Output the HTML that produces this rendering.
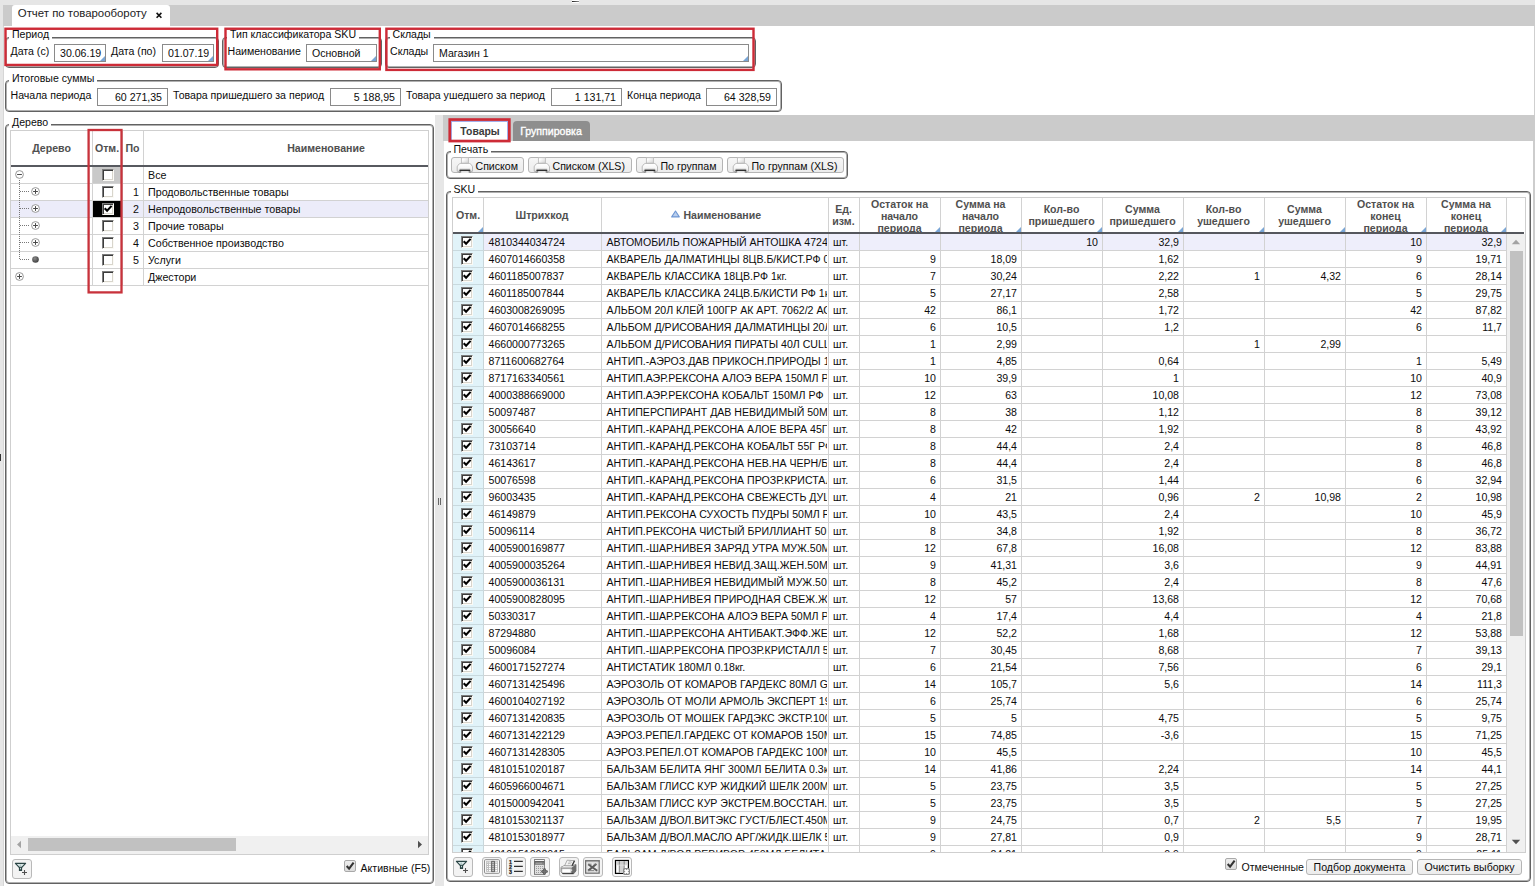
<!DOCTYPE html>
<html lang="ru"><head><meta charset="utf-8"><title>Отчет по товарообороту</title>
<style>
html,body{margin:0;padding:0}
body{width:1535px;height:886px;position:relative;overflow:hidden;background:#fff;font-family:"Liberation Sans",sans-serif;font-size:10.58px;line-height:12px;color:#0c0c0c}
div,span{box-sizing:border-box}
.a{position:absolute}
.fs{position:absolute;border:1px solid #626262;border-radius:4px;box-shadow:inset 0 0 0 1px #b0b0b0}
.lg{position:absolute;background:#fff;padding:0 3px;white-space:nowrap;height:12px;line-height:12px}
.lb{position:absolute;white-space:nowrap;height:12px;line-height:12px}
.in{position:absolute;border:1px solid #8a8a8a;background:#fff;height:18px;line-height:17px;white-space:nowrap;overflow:hidden;padding:0 5px}
.in.r{text-align:right}
.tri{position:absolute;right:0;bottom:0;width:0;height:0;border-style:solid;border-width:0 0 5px 5px;border-color:transparent transparent #79a5d6 transparent}
.red{position:absolute;border:2px solid #cd2b37;transform:translate(0.5px,0.5px)}
.btn{position:absolute;border:1px solid #b5b5b5;border-radius:3px;background:linear-gradient(#f6f6f6,#ececec);white-space:nowrap;text-align:center}
.hd{position:absolute;top:0;height:34px;text-align:center;font-weight:bold;color:#505050;overflow:hidden;border-right:1px solid #d2d2d2;line-height:12px;white-space:nowrap}
.hd span{position:absolute;left:0;right:0}
.h1 span{top:11px}.h2 span{top:4.5px}.h3 span{top:-0.5px}
.row{position:absolute;left:0;height:17px;border-bottom:1px solid #d2d2d2}
.c{position:absolute;top:0;height:16px;line-height:16px;border-right:1px solid #d2d2d2;white-space:nowrap;overflow:hidden;padding:0 5px}
.c.n{text-align:right;padding-right:4px}
.cb{position:absolute;width:12px;height:11.5px;background:#fff;border-top:1px solid #7c7c7c;border-left:1px solid #7c7c7c;border-right:1px solid #fbfaf6;border-bottom:1px solid #fbfaf6;box-shadow:inset 1px 1px 0 #3c3c3c,inset -1px -1px 0 #d8d5cc}
.cb svg{position:absolute;left:0;top:0}
.tb{position:absolute;width:19px;height:19px;border:1px solid #b9b9b9;border-radius:3px;background:#f3f3f3}
.tb svg{position:absolute;left:0;top:0}
</style></head>
<body>
<div class="a" style="left:0;top:0;width:1535px;height:5px;background:#e6e6e6"></div>
<div class="a" style="left:0;top:5px;width:1535px;height:21px;background:#cbcbcb"></div>
<div class="a" style="left:0;top:5px;width:3px;height:881px;background:#e6e6e6"></div>
<div class="a" style="left:3px;top:26px;width:1px;height:860px;background:#d6d6d6"></div>
<div class="a" style="left:1534px;top:26px;width:1px;height:90px;background:#cfcfcf"></div>
<div class="a" style="left:1533px;top:141px;width:2px;height:745px;background:#cdcdcd"></div>
<div class="a" style="left:572px;top:0;width:7px;height:3px;background:#fff"></div>
<div class="a" style="left:572px;top:1px;width:7px;height:1px;background:linear-gradient(90deg,#222,#8a8a8a)"></div>
<div class="a" style="left:12px;top:5px;width:158px;height:21px;background:#fff;border-radius:3px 3px 0 0"></div>
<div class="lb" style="left:17.8px;top:6px;font-size:11.4px;height:14px;line-height:14px;color:#222">Отчет по товарообороту</div>
<svg class="a" style="left:154px;top:11px" width="10" height="9" viewBox="0 0 10 9"><path d="M2.6 1.9 L7.4 6.7 M7.4 1.9 L2.6 6.7" stroke="#111" stroke-width="1.6" fill="none"/></svg>
<div class="fs" style="left:5px;top:37px;width:214px;height:31px"></div>
<div class="lg" style="left:9px;top:28px">Период</div>
<div class="lb" style="left:10.5px;top:45px">Дата (с)</div>
<div class="in" style="left:54px;top:44px;width:52px">30.06.19<i class="tri"></i></div>
<div class="lb" style="left:111px;top:45px">Дата (по)</div>
<div class="in" style="left:162px;top:44px;width:52px">01.07.19<i class="tri"></i></div>
<svg class="a" style="left:2px;top:25px" width="219" height="43" viewBox="0 0 219 43"><rect x="3.50" y="3.75" width="211.70" height="36.20" fill="none" stroke="#cd2b37" stroke-width="2.4"/></svg>
<div class="fs" style="left:222px;top:37px;width:160px;height:31px"></div>
<div class="lg" style="left:227px;top:28px">Тип классификатора SKU</div>
<div class="lb" style="left:227.5px;top:45px">Наименование</div>
<div class="in" style="left:306px;top:44px;width:71px">Основной<i class="tri"></i></div>
<svg class="a" style="left:222px;top:25px" width="161" height="48" viewBox="0 0 161 48"><rect x="3.50" y="3.75" width="154.30" height="40.55" fill="none" stroke="#cd2b37" stroke-width="2.4"/></svg>
<div class="fs" style="left:385px;top:37px;width:371px;height:31px"></div>
<div class="lg" style="left:389.5px;top:28px">Склады</div>
<div class="lb" style="left:390px;top:45px">Склады</div>
<div class="in" style="left:433px;top:44px;width:316px">Магазин 1<i class="tri"></i></div>
<svg class="a" style="left:383px;top:25px" width="374" height="48" viewBox="0 0 374 48"><rect x="3.40" y="3.75" width="367.10" height="41.15" fill="none" stroke="#cd2b37" stroke-width="2.4"/></svg>
<div class="fs" style="left:5px;top:80px;width:777px;height:32px"></div>
<div class="lg" style="left:9px;top:72px">Итоговые суммы</div>
<div class="lb" style="left:10.5px;top:89px">Начала периода</div>
<div class="in r" style="left:97px;top:88px;width:71px">60 271,35</div>
<div class="lb" style="left:173px;top:89px">Товара пришедшего за период</div>
<div class="in r" style="left:330px;top:88px;width:71px">5 188,95</div>
<div class="lb" style="left:406px;top:89px">Товара ушедшего за период</div>
<div class="in r" style="left:551px;top:88px;width:71px">1 131,71</div>
<div class="lb" style="left:627px;top:89px">Конца периода</div>
<div class="in r" style="left:706px;top:88px;width:71px">64 328,59</div>
<div class="fs" style="left:5px;top:124px;width:429px;height:760px"></div>
<div class="lg" style="left:9px;top:116px">Дерево</div>
<div class="a" id="tree" style="left:10px;top:130px;width:419px;height:725px;border:1px solid #cfcfcf;overflow:hidden">
<div class="hd h1" style="left:0px;width:82px;"><span>Дерево</span></div>
<div class="hd h1" style="left:81px;width:31px;"><span>Отм.</span></div>
<div class="hd h1" style="left:111px;width:22px;"><span>По</span></div>
<div class="hd h1" style="left:132px;width:366px;border-right:none;"><span>Наименование</span></div>
<div class="a" style="left:0;top:34px;width:417px;height:2px;background:#57595f"></div>
<div class="row" style="top:36px;width:417px;font-size:10.7px;">
<div class="c" style="left:0;width:82px"></div>
<div class="c" style="left:82px;width:30px;padding:0;background:#c9c9c9;"><div class="cb" style="left:9px;top:2px"></div></div>
<div class="c n" style="left:112px;width:21px;padding:0 4px 0 0"></div>
<div class="c" style="left:133px;width:284px;border-right:none;padding-left:4px">Все</div>
</div>
<div class="row" style="top:53px;width:417px;font-size:10.7px;">
<div class="c" style="left:0;width:82px"></div>
<div class="c" style="left:82px;width:30px;padding:0;"><div class="cb" style="left:9px;top:2px"></div></div>
<div class="c n" style="left:112px;width:21px;padding:0 4px 0 0">1</div>
<div class="c" style="left:133px;width:284px;border-right:none;padding-left:4px">Продовольственные товары</div>
</div>
<div class="row" style="top:70px;width:417px;font-size:10.7px;background:#ececf9;">
<div class="c" style="left:0;width:82px"></div>
<div class="c" style="left:82px;width:30px;padding:0;background:#000;"><div class="cb" style="left:9px;top:2px"><svg width="10" height="10" viewBox="0 0 10 10"><path d="M1.7 4.2 L4.1 6.8 L8.6 1.9" fill="none" stroke="#000" stroke-width="2.1"/></svg></div></div>
<div class="c n" style="left:112px;width:21px;padding:0 4px 0 0">2</div>
<div class="c" style="left:133px;width:284px;border-right:none;padding-left:4px">Непродовольственные товары</div>
</div>
<div class="row" style="top:87px;width:417px;font-size:10.7px;">
<div class="c" style="left:0;width:82px"></div>
<div class="c" style="left:82px;width:30px;padding:0;"><div class="cb" style="left:9px;top:2px"></div></div>
<div class="c n" style="left:112px;width:21px;padding:0 4px 0 0">3</div>
<div class="c" style="left:133px;width:284px;border-right:none;padding-left:4px">Прочие товары</div>
</div>
<div class="row" style="top:104px;width:417px;font-size:10.7px;">
<div class="c" style="left:0;width:82px"></div>
<div class="c" style="left:82px;width:30px;padding:0;"><div class="cb" style="left:9px;top:2px"></div></div>
<div class="c n" style="left:112px;width:21px;padding:0 4px 0 0">4</div>
<div class="c" style="left:133px;width:284px;border-right:none;padding-left:4px">Собственное производство</div>
</div>
<div class="row" style="top:121px;width:417px;font-size:10.7px;">
<div class="c" style="left:0;width:82px"></div>
<div class="c" style="left:82px;width:30px;padding:0;"><div class="cb" style="left:9px;top:2px"></div></div>
<div class="c n" style="left:112px;width:21px;padding:0 4px 0 0">5</div>
<div class="c" style="left:133px;width:284px;border-right:none;padding-left:4px">Услуги</div>
</div>
<div class="row" style="top:138px;width:417px;font-size:10.7px;">
<div class="c" style="left:0;width:82px"></div>
<div class="c" style="left:82px;width:30px;padding:0;"><div class="cb" style="left:9px;top:2px"></div></div>
<div class="c n" style="left:112px;width:21px;padding:0 4px 0 0"></div>
<div class="c" style="left:133px;width:284px;border-right:none;padding-left:4px">Джестори</div>
</div>
<div class="a" style="left:8px;top:49px;width:1px;height:80px;background:repeating-linear-gradient(#777 0 1px,transparent 1px 2px)"></div>
<div class="a" style="left:9px;top:60px;width:9px;height:1px;background:repeating-linear-gradient(90deg,#777 0 1px,transparent 1px 2px)"></div>
<div class="a" style="left:9px;top:77px;width:9px;height:1px;background:repeating-linear-gradient(90deg,#777 0 1px,transparent 1px 2px)"></div>
<div class="a" style="left:9px;top:94px;width:9px;height:1px;background:repeating-linear-gradient(90deg,#777 0 1px,transparent 1px 2px)"></div>
<div class="a" style="left:9px;top:111px;width:9px;height:1px;background:repeating-linear-gradient(90deg,#777 0 1px,transparent 1px 2px)"></div>
<div class="a" style="left:9px;top:128px;width:9px;height:1px;background:repeating-linear-gradient(90deg,#777 0 1px,transparent 1px 2px)"></div>
<svg class="a" style="left:2px;top:37px" width="12" height="12" viewBox="0 0 12 12"><circle cx="6.5" cy="6.5" r="3.9" fill="#fff" stroke="#8c8c8c" stroke-width="0.9"/><path d="M4.1 6.5 H8.9" stroke="#4a4a4a" stroke-width="1" fill="none"/></svg>
<svg class="a" style="left:18px;top:54px" width="12" height="12" viewBox="0 0 12 12"><circle cx="6.5" cy="6.5" r="3.9" fill="#fff" stroke="#8c8c8c" stroke-width="0.9"/><path d="M4.1 6.5 H8.9 M6.5 4.1 V8.9" stroke="#4a4a4a" stroke-width="1" fill="none"/></svg>
<svg class="a" style="left:18px;top:71px" width="12" height="12" viewBox="0 0 12 12"><circle cx="6.5" cy="6.5" r="3.9" fill="#fff" stroke="#8c8c8c" stroke-width="0.9"/><path d="M4.1 6.5 H8.9 M6.5 4.1 V8.9" stroke="#4a4a4a" stroke-width="1" fill="none"/></svg>
<svg class="a" style="left:18px;top:88px" width="12" height="12" viewBox="0 0 12 12"><circle cx="6.5" cy="6.5" r="3.9" fill="#fff" stroke="#8c8c8c" stroke-width="0.9"/><path d="M4.1 6.5 H8.9 M6.5 4.1 V8.9" stroke="#4a4a4a" stroke-width="1" fill="none"/></svg>
<svg class="a" style="left:18px;top:105px" width="12" height="12" viewBox="0 0 12 12"><circle cx="6.5" cy="6.5" r="3.9" fill="#fff" stroke="#8c8c8c" stroke-width="0.9"/><path d="M4.1 6.5 H8.9 M6.5 4.1 V8.9" stroke="#4a4a4a" stroke-width="1" fill="none"/></svg>
<svg class="a" style="left:18px;top:122px" width="12" height="12" viewBox="0 0 12 12"><defs><radialGradient id="dg" cx="0.4" cy="0.35" r="0.7"><stop offset="0" stop-color="#8a8a8a"/><stop offset="1" stop-color="#3a3a3a"/></radialGradient></defs><circle cx="6.5" cy="6.5" r="3.3" fill="url(#dg)"/></svg>
<svg class="a" style="left:2px;top:139px" width="12" height="12" viewBox="0 0 12 12"><circle cx="6.5" cy="6.5" r="3.9" fill="#fff" stroke="#8c8c8c" stroke-width="0.9"/><path d="M4.1 6.5 H8.9 M6.5 4.1 V8.9" stroke="#4a4a4a" stroke-width="1" fill="none"/></svg>
<div class="a" style="left:0;top:705px;width:417px;height:18px;background:#f0f0f0"></div>
<div class="a" style="left:17px;top:707px;width:208px;height:13px;background:#c1c1c1"></div>
<svg class="a" style="left:5px;top:709px" width="6" height="9" viewBox="0 0 6 9"><path d="M5 0.8 L1 4.5 L5 8.2 Z" fill="#a3a3a3"/></svg>
<svg class="a" style="left:406px;top:709px" width="6" height="9" viewBox="0 0 6 9"><path d="M1 0.8 L5 4.5 L1 8.2 Z" fill="#505050"/></svg>
</div>
<svg class="a" style="left:85px;top:127px" width="40" height="169" viewBox="0 0 40 169"><rect x="3.60" y="3.00" width="32.90" height="162.40" fill="none" stroke="#c8323b" stroke-width="2.3"/></svg>
<div class="tb" style="left:12px;top:859px;width:20px;height:20px"></div>
<svg class="a" style="left:12px;top:859px" width="20" height="20" viewBox="0 0 20 20"><g transform="translate(0.2,0.2)"><path d="M3.2 4.1 H13.4 L9.6 8.1 H7 Z" fill="#dbe8e8" stroke="#2b4545" stroke-width="1.15" stroke-linejoin="round"/><rect x="6.7" y="7.9" width="3.2" height="3.9" fill="#2b4545"/><rect x="7.8" y="8.6" width="1" height="1.5" fill="#c5d8d8"/><circle cx="8" cy="6" r="0.6" fill="#8aa"/><path d="M9.8 13.3 H14.8 M12.3 10.8 V15.8" stroke="#505050" stroke-width="1.1" fill="none"/></g></svg>
<div class="a" style="left:344px;top:860px;width:12px;height:12px;border:1px solid #a9a9a9;border-radius:2px;background:linear-gradient(#ededed,#dcdcdc)"><svg class="a" style="left:0;top:0" width="10" height="10" viewBox="0 0 10 10"><path d="M1.7 5 L4.1 7.6 L8.6 1.7" fill="none" stroke="#333" stroke-width="2.1"/></svg></div>
<div class="lb" style="left:360.5px;top:862px">Активные (F5)</div>
<div class="a" style="left:435px;top:115px;width:9px;height:771px;background:#e6e6e6"></div>
<div class="a" style="left:438px;top:498px;width:1px;height:7px;background:#666"></div>
<div class="a" style="left:440px;top:498px;width:1px;height:7px;background:#666"></div>
<div class="a" style="left:443px;top:115px;width:1092px;height:26px;background:#cbcbcb"></div>
<div class="a" style="left:512.5px;top:121px;width:77px;height:20px;background:#8e8e8e;border-radius:4px 4px 0 0;color:#fff;text-align:center;line-height:20px;-webkit-text-stroke:0.35px #fff">Группировка</div>
<div class="a" style="left:451px;top:121px;width:57px;height:20px;background:#fff;border:1px solid #a3afea;border-bottom:none;font-weight:bold;font-size:10.4px;text-align:center;line-height:19px;color:#3a3a3a;padding-left:1px">Товары</div>
<svg class="a" style="left:446px;top:116px" width="68" height="30" viewBox="0 0 68 30"><rect x="3.75" y="3.55" width="59.6" height="21.5" fill="none" stroke="#cd2b37" stroke-width="2.7"/></svg>
<div class="fs" style="left:446px;top:151px;width:402px;height:28px"></div>
<div class="lg" style="left:450.5px;top:143px">Печать</div>
<div class="btn" style="left:451px;top:157px;width:73px;height:16px;line-height:16px;text-align:left;padding-left:23.5px">Списком</div>
<svg class="a" style="left:451px;top:157px" width="24" height="17" viewBox="0 0 24 17"><defs><linearGradient id="pg0" x1="0" y1="0" x2="1" y2="1"><stop offset="0.25" stop-color="#fff"/><stop offset="1" stop-color="#cfcfcf"/></linearGradient><linearGradient id="ps0" x1="0" y1="0" x2="0" y2="1"><stop offset="0" stop-color="#8a8a8a"/><stop offset="0.55" stop-color="#333"/><stop offset="1" stop-color="#222"/></linearGradient><linearGradient id="pb0" x1="0" y1="0" x2="0" y2="1"><stop offset="0" stop-color="#fff"/><stop offset="0.6" stop-color="#f4f4f4"/><stop offset="1" stop-color="#d0d0d0"/></linearGradient></defs><rect x="10.4" y="0.7" width="7" height="5.6" fill="url(#pg0)" stroke="#bdbdbd" stroke-width="0.9"/><path d="M6.2 14.3 V9.8 Q6.3 8.4 8.4 6.9 Q9 6.4 9.8 6.4 H17.9 Q18.7 6.4 19.3 6.9 Q21.4 8.4 21.5 9.8 V14.3 H20.5 L19.9 15.5 H18.3 L17.9 14.3 H9.8 L9.4 15.5 H7.8 L7.2 14.3 Z" fill="url(#pb0)" stroke="#b2b2b2" stroke-width="0.9" stroke-linejoin="round"/><path d="M7.4 14.4 L7.9 15.5 H9.3 L9.8 14.4 Z M17.9 14.4 L18.4 15.5 H19.8 L20.3 14.4 Z" fill="#7a7a7a"/><rect x="8.3" y="12.3" width="11.1" height="1.9" rx="0.9" fill="url(#ps0)"/><rect x="8.6" y="11.6" width="10.5" height="0.8" fill="#9a9a9a" opacity="0.4"/><rect x="10.2" y="14.3" width="7.4" height="1.4" fill="#fff"/></svg>
<div class="btn" style="left:528px;top:157px;width:104px;height:16px;line-height:16px;text-align:left;padding-left:23.5px">Списком (XLS)</div>
<svg class="a" style="left:528px;top:157px" width="24" height="17" viewBox="0 0 24 17"><defs><linearGradient id="pg1" x1="0" y1="0" x2="1" y2="1"><stop offset="0.25" stop-color="#fff"/><stop offset="1" stop-color="#cfcfcf"/></linearGradient><linearGradient id="ps1" x1="0" y1="0" x2="0" y2="1"><stop offset="0" stop-color="#8a8a8a"/><stop offset="0.55" stop-color="#333"/><stop offset="1" stop-color="#222"/></linearGradient><linearGradient id="pb1" x1="0" y1="0" x2="0" y2="1"><stop offset="0" stop-color="#fff"/><stop offset="0.6" stop-color="#f4f4f4"/><stop offset="1" stop-color="#d0d0d0"/></linearGradient></defs><rect x="10.4" y="0.7" width="7" height="5.6" fill="url(#pg1)" stroke="#bdbdbd" stroke-width="0.9"/><path d="M6.2 14.3 V9.8 Q6.3 8.4 8.4 6.9 Q9 6.4 9.8 6.4 H17.9 Q18.7 6.4 19.3 6.9 Q21.4 8.4 21.5 9.8 V14.3 H20.5 L19.9 15.5 H18.3 L17.9 14.3 H9.8 L9.4 15.5 H7.8 L7.2 14.3 Z" fill="url(#pb1)" stroke="#b2b2b2" stroke-width="0.9" stroke-linejoin="round"/><path d="M7.4 14.4 L7.9 15.5 H9.3 L9.8 14.4 Z M17.9 14.4 L18.4 15.5 H19.8 L20.3 14.4 Z" fill="#7a7a7a"/><rect x="8.3" y="12.3" width="11.1" height="1.9" rx="0.9" fill="url(#ps1)"/><rect x="8.6" y="11.6" width="10.5" height="0.8" fill="#9a9a9a" opacity="0.4"/><rect x="10.2" y="14.3" width="7.4" height="1.4" fill="#fff"/></svg>
<div class="btn" style="left:636px;top:157px;width:87px;height:16px;line-height:16px;text-align:left;padding-left:23.5px">По группам</div>
<svg class="a" style="left:636px;top:157px" width="24" height="17" viewBox="0 0 24 17"><defs><linearGradient id="pg2" x1="0" y1="0" x2="1" y2="1"><stop offset="0.25" stop-color="#fff"/><stop offset="1" stop-color="#cfcfcf"/></linearGradient><linearGradient id="ps2" x1="0" y1="0" x2="0" y2="1"><stop offset="0" stop-color="#8a8a8a"/><stop offset="0.55" stop-color="#333"/><stop offset="1" stop-color="#222"/></linearGradient><linearGradient id="pb2" x1="0" y1="0" x2="0" y2="1"><stop offset="0" stop-color="#fff"/><stop offset="0.6" stop-color="#f4f4f4"/><stop offset="1" stop-color="#d0d0d0"/></linearGradient></defs><rect x="10.4" y="0.7" width="7" height="5.6" fill="url(#pg2)" stroke="#bdbdbd" stroke-width="0.9"/><path d="M6.2 14.3 V9.8 Q6.3 8.4 8.4 6.9 Q9 6.4 9.8 6.4 H17.9 Q18.7 6.4 19.3 6.9 Q21.4 8.4 21.5 9.8 V14.3 H20.5 L19.9 15.5 H18.3 L17.9 14.3 H9.8 L9.4 15.5 H7.8 L7.2 14.3 Z" fill="url(#pb2)" stroke="#b2b2b2" stroke-width="0.9" stroke-linejoin="round"/><path d="M7.4 14.4 L7.9 15.5 H9.3 L9.8 14.4 Z M17.9 14.4 L18.4 15.5 H19.8 L20.3 14.4 Z" fill="#7a7a7a"/><rect x="8.3" y="12.3" width="11.1" height="1.9" rx="0.9" fill="url(#ps2)"/><rect x="8.6" y="11.6" width="10.5" height="0.8" fill="#9a9a9a" opacity="0.4"/><rect x="10.2" y="14.3" width="7.4" height="1.4" fill="#fff"/></svg>
<div class="btn" style="left:727px;top:157px;width:117px;height:16px;line-height:16px;text-align:left;padding-left:23.5px">По группам (XLS)</div>
<svg class="a" style="left:727px;top:157px" width="24" height="17" viewBox="0 0 24 17"><defs><linearGradient id="pg3" x1="0" y1="0" x2="1" y2="1"><stop offset="0.25" stop-color="#fff"/><stop offset="1" stop-color="#cfcfcf"/></linearGradient><linearGradient id="ps3" x1="0" y1="0" x2="0" y2="1"><stop offset="0" stop-color="#8a8a8a"/><stop offset="0.55" stop-color="#333"/><stop offset="1" stop-color="#222"/></linearGradient><linearGradient id="pb3" x1="0" y1="0" x2="0" y2="1"><stop offset="0" stop-color="#fff"/><stop offset="0.6" stop-color="#f4f4f4"/><stop offset="1" stop-color="#d0d0d0"/></linearGradient></defs><rect x="10.4" y="0.7" width="7" height="5.6" fill="url(#pg3)" stroke="#bdbdbd" stroke-width="0.9"/><path d="M6.2 14.3 V9.8 Q6.3 8.4 8.4 6.9 Q9 6.4 9.8 6.4 H17.9 Q18.7 6.4 19.3 6.9 Q21.4 8.4 21.5 9.8 V14.3 H20.5 L19.9 15.5 H18.3 L17.9 14.3 H9.8 L9.4 15.5 H7.8 L7.2 14.3 Z" fill="url(#pb3)" stroke="#b2b2b2" stroke-width="0.9" stroke-linejoin="round"/><path d="M7.4 14.4 L7.9 15.5 H9.3 L9.8 14.4 Z M17.9 14.4 L18.4 15.5 H19.8 L20.3 14.4 Z" fill="#7a7a7a"/><rect x="8.3" y="12.3" width="11.1" height="1.9" rx="0.9" fill="url(#ps3)"/><rect x="8.6" y="11.6" width="10.5" height="0.8" fill="#9a9a9a" opacity="0.4"/><rect x="10.2" y="14.3" width="7.4" height="1.4" fill="#fff"/></svg>
<div class="fs" style="left:446px;top:191px;width:1085px;height:691px"></div>
<div class="lg" style="left:450.5px;top:183px">SKU</div>
<div class="a" id="grid" style="left:452px;top:197px;width:1074px;height:656px;border:1px solid #cfcfcf;overflow:hidden">
<div class="hd h1" style="left:0px;width:31px"><span>Отм.</span><i class="tri"></i></div>
<div class="hd h1" style="left:30px;width:119px"><span>Штрихкод</span></div>
<div class="hd h1" style="left:148px;width:228px"><span><svg width="9" height="8" viewBox="0 0 9 8" style="margin:0 3.5px 0 3px;position:relative;top:-1px"><path d="M4.5 1 L8.3 6.9 H0.7 Z" fill="#b9cfee" stroke="#6f97d3" stroke-width="1.1" stroke-linejoin="round"/></svg>Наименование</span></div>
<div class="hd h2" style="left:375px;width:32px"><span>Ед.<br>изм.</span></div>
<div class="hd h3" style="left:406px;width:82px"><span>Остаток на<br>начало<br>периода</span><i class="tri"></i></div>
<div class="hd h3" style="left:487px;width:82px"><span>Сумма на<br>начало<br>периода</span><i class="tri"></i></div>
<div class="hd h2" style="left:568px;width:82px"><span>Кол-во<br>пришедшего</span><i class="tri"></i></div>
<div class="hd h2" style="left:649px;width:82px"><span>Сумма<br>пришедшего</span><i class="tri"></i></div>
<div class="hd h2" style="left:730px;width:82px"><span>Кол-во<br>ушедшего</span><i class="tri"></i></div>
<div class="hd h2" style="left:811px;width:82px"><span>Сумма<br>ушедшего</span><i class="tri"></i></div>
<div class="hd h3" style="left:892px;width:82px"><span>Остаток на<br>конец<br>периода</span><i class="tri"></i></div>
<div class="hd h3" style="left:973px;width:81px"><span>Сумма на<br>конец<br>периода</span><i class="tri"></i></div>
<div class="a" style="left:0;top:34px;width:1071px;height:2px;background:#55575d"></div>
<div class="row" style="top:36px;width:1054px;background:#eeeefb;">
<div class="c" style="left:0;width:31px;padding:0;background:#e1f3f9;box-shadow:0 1px 0 #c9d9de;border-right-color:#c9d6da"><div class="cb" style="left:8px;top:2px"><svg width="10" height="10" viewBox="0 0 10 10"><path d="M1.7 4.2 L4.1 6.8 L8.6 1.9" fill="none" stroke="#000" stroke-width="2.1"/></svg></div></div>
<div class="c" style="left:31px;width:118px;padding:0 0 0 4.5px">4810344034724</div>
<div class="c" style="left:149px;width:225px;padding:0 0 0 4.5px;border-right:none">АВТОМОБИЛЬ ПОЖАРНЫЙ АНТОШКА 4724 В ПАК.</div><div class="a" style="left:375px;top:0;width:1px;height:16px;background:#d2d2d2"></div>
<div class="c" style="left:376px;width:31px;padding:0 0 0 4px">шт.</div>
<div class="c n" style="left:407px;width:81px"></div>
<div class="c n" style="left:488px;width:81px"></div>
<div class="c n" style="left:569px;width:81px">10</div>
<div class="c n" style="left:650px;width:81px">32,9</div>
<div class="c n" style="left:731px;width:81px"></div>
<div class="c n" style="left:812px;width:81px"></div>
<div class="c n" style="left:893px;width:81px">10</div>
<div class="c n" style="left:974px;width:80px">32,9</div>
</div>
<div class="row" style="top:53px;width:1054px;">
<div class="c" style="left:0;width:31px;padding:0;background:#e1f3f9;box-shadow:0 1px 0 #c9d9de;border-right-color:#c9d6da"><div class="cb" style="left:8px;top:2px"><svg width="10" height="10" viewBox="0 0 10 10"><path d="M1.7 4.2 L4.1 6.8 L8.6 1.9" fill="none" stroke="#000" stroke-width="2.1"/></svg></div></div>
<div class="c" style="left:31px;width:118px;padding:0 0 0 4.5px">4607014660358</div>
<div class="c" style="left:149px;width:225px;padding:0 0 0 4.5px;border-right:none">АКВАРЕЛЬ ДАЛМАТИНЦЫ 8ЦВ.Б/КИСТ.РФ 0.04кг.</div><div class="a" style="left:375px;top:0;width:1px;height:16px;background:#d2d2d2"></div>
<div class="c" style="left:376px;width:31px;padding:0 0 0 4px">шт.</div>
<div class="c n" style="left:407px;width:81px">9</div>
<div class="c n" style="left:488px;width:81px">18,09</div>
<div class="c n" style="left:569px;width:81px"></div>
<div class="c n" style="left:650px;width:81px">1,62</div>
<div class="c n" style="left:731px;width:81px"></div>
<div class="c n" style="left:812px;width:81px"></div>
<div class="c n" style="left:893px;width:81px">9</div>
<div class="c n" style="left:974px;width:80px">19,71</div>
</div>
<div class="row" style="top:70px;width:1054px;">
<div class="c" style="left:0;width:31px;padding:0;background:#e1f3f9;box-shadow:0 1px 0 #c9d9de;border-right-color:#c9d6da"><div class="cb" style="left:8px;top:2px"><svg width="10" height="10" viewBox="0 0 10 10"><path d="M1.7 4.2 L4.1 6.8 L8.6 1.9" fill="none" stroke="#000" stroke-width="2.1"/></svg></div></div>
<div class="c" style="left:31px;width:118px;padding:0 0 0 4.5px">4601185007837</div>
<div class="c" style="left:149px;width:225px;padding:0 0 0 4.5px;border-right:none">АКВАРЕЛЬ КЛАССИКА 18ЦВ.РФ 1кг.</div><div class="a" style="left:375px;top:0;width:1px;height:16px;background:#d2d2d2"></div>
<div class="c" style="left:376px;width:31px;padding:0 0 0 4px">шт.</div>
<div class="c n" style="left:407px;width:81px">7</div>
<div class="c n" style="left:488px;width:81px">30,24</div>
<div class="c n" style="left:569px;width:81px"></div>
<div class="c n" style="left:650px;width:81px">2,22</div>
<div class="c n" style="left:731px;width:81px">1</div>
<div class="c n" style="left:812px;width:81px">4,32</div>
<div class="c n" style="left:893px;width:81px">6</div>
<div class="c n" style="left:974px;width:80px">28,14</div>
</div>
<div class="row" style="top:87px;width:1054px;">
<div class="c" style="left:0;width:31px;padding:0;background:#e1f3f9;box-shadow:0 1px 0 #c9d9de;border-right-color:#c9d6da"><div class="cb" style="left:8px;top:2px"><svg width="10" height="10" viewBox="0 0 10 10"><path d="M1.7 4.2 L4.1 6.8 L8.6 1.9" fill="none" stroke="#000" stroke-width="2.1"/></svg></div></div>
<div class="c" style="left:31px;width:118px;padding:0 0 0 4.5px">4601185007844</div>
<div class="c" style="left:149px;width:225px;padding:0 0 0 4.5px;border-right:none">АКВАРЕЛЬ КЛАССИКА 24ЦВ.Б/КИСТИ РФ 1кг.</div><div class="a" style="left:375px;top:0;width:1px;height:16px;background:#d2d2d2"></div>
<div class="c" style="left:376px;width:31px;padding:0 0 0 4px">шт.</div>
<div class="c n" style="left:407px;width:81px">5</div>
<div class="c n" style="left:488px;width:81px">27,17</div>
<div class="c n" style="left:569px;width:81px"></div>
<div class="c n" style="left:650px;width:81px">2,58</div>
<div class="c n" style="left:731px;width:81px"></div>
<div class="c n" style="left:812px;width:81px"></div>
<div class="c n" style="left:893px;width:81px">5</div>
<div class="c n" style="left:974px;width:80px">29,75</div>
</div>
<div class="row" style="top:104px;width:1054px;">
<div class="c" style="left:0;width:31px;padding:0;background:#e1f3f9;box-shadow:0 1px 0 #c9d9de;border-right-color:#c9d6da"><div class="cb" style="left:8px;top:2px"><svg width="10" height="10" viewBox="0 0 10 10"><path d="M1.7 4.2 L4.1 6.8 L8.6 1.9" fill="none" stroke="#000" stroke-width="2.1"/></svg></div></div>
<div class="c" style="left:31px;width:118px;padding:0 0 0 4.5px">4603008269095</div>
<div class="c" style="left:149px;width:225px;padding:0 0 0 4.5px;border-right:none">АЛЬБОМ 20Л КЛЕЙ 100ГР АК АРТ. 7062/2 АС</div><div class="a" style="left:375px;top:0;width:1px;height:16px;background:#d2d2d2"></div>
<div class="c" style="left:376px;width:31px;padding:0 0 0 4px">шт.</div>
<div class="c n" style="left:407px;width:81px">42</div>
<div class="c n" style="left:488px;width:81px">86,1</div>
<div class="c n" style="left:569px;width:81px"></div>
<div class="c n" style="left:650px;width:81px">1,72</div>
<div class="c n" style="left:731px;width:81px"></div>
<div class="c n" style="left:812px;width:81px"></div>
<div class="c n" style="left:893px;width:81px">42</div>
<div class="c n" style="left:974px;width:80px">87,82</div>
</div>
<div class="row" style="top:121px;width:1054px;">
<div class="c" style="left:0;width:31px;padding:0;background:#e1f3f9;box-shadow:0 1px 0 #c9d9de;border-right-color:#c9d6da"><div class="cb" style="left:8px;top:2px"><svg width="10" height="10" viewBox="0 0 10 10"><path d="M1.7 4.2 L4.1 6.8 L8.6 1.9" fill="none" stroke="#000" stroke-width="2.1"/></svg></div></div>
<div class="c" style="left:31px;width:118px;padding:0 0 0 4.5px">4607014668255</div>
<div class="c" style="left:149px;width:225px;padding:0 0 0 4.5px;border-right:none">АЛЬБОМ Д/РИСОВАНИЯ ДАЛМАТИНЦЫ 20Л РФ</div><div class="a" style="left:375px;top:0;width:1px;height:16px;background:#d2d2d2"></div>
<div class="c" style="left:376px;width:31px;padding:0 0 0 4px">шт.</div>
<div class="c n" style="left:407px;width:81px">6</div>
<div class="c n" style="left:488px;width:81px">10,5</div>
<div class="c n" style="left:569px;width:81px"></div>
<div class="c n" style="left:650px;width:81px">1,2</div>
<div class="c n" style="left:731px;width:81px"></div>
<div class="c n" style="left:812px;width:81px"></div>
<div class="c n" style="left:893px;width:81px">6</div>
<div class="c n" style="left:974px;width:80px">11,7</div>
</div>
<div class="row" style="top:138px;width:1054px;">
<div class="c" style="left:0;width:31px;padding:0;background:#e1f3f9;box-shadow:0 1px 0 #c9d9de;border-right-color:#c9d6da"><div class="cb" style="left:8px;top:2px"><svg width="10" height="10" viewBox="0 0 10 10"><path d="M1.7 4.2 L4.1 6.8 L8.6 1.9" fill="none" stroke="#000" stroke-width="2.1"/></svg></div></div>
<div class="c" style="left:31px;width:118px;padding:0 0 0 4.5px">4660000773265</div>
<div class="c" style="left:149px;width:225px;padding:0 0 0 4.5px;border-right:none">АЛЬБОМ Д/РИСОВАНИЯ ПИРАТЫ 40Л CULLINAN</div><div class="a" style="left:375px;top:0;width:1px;height:16px;background:#d2d2d2"></div>
<div class="c" style="left:376px;width:31px;padding:0 0 0 4px">шт.</div>
<div class="c n" style="left:407px;width:81px">1</div>
<div class="c n" style="left:488px;width:81px">2,99</div>
<div class="c n" style="left:569px;width:81px"></div>
<div class="c n" style="left:650px;width:81px"></div>
<div class="c n" style="left:731px;width:81px">1</div>
<div class="c n" style="left:812px;width:81px">2,99</div>
<div class="c n" style="left:893px;width:81px"></div>
<div class="c n" style="left:974px;width:80px"></div>
</div>
<div class="row" style="top:155px;width:1054px;">
<div class="c" style="left:0;width:31px;padding:0;background:#e1f3f9;box-shadow:0 1px 0 #c9d9de;border-right-color:#c9d6da"><div class="cb" style="left:8px;top:2px"><svg width="10" height="10" viewBox="0 0 10 10"><path d="M1.7 4.2 L4.1 6.8 L8.6 1.9" fill="none" stroke="#000" stroke-width="2.1"/></svg></div></div>
<div class="c" style="left:31px;width:118px;padding:0 0 0 4.5px">8711600682764</div>
<div class="c" style="left:149px;width:225px;padding:0 0 0 4.5px;border-right:none">АНТИП.-АЭРОЗ.ДАВ ПРИКОСН.ПРИРОДЫ 150МЛ</div><div class="a" style="left:375px;top:0;width:1px;height:16px;background:#d2d2d2"></div>
<div class="c" style="left:376px;width:31px;padding:0 0 0 4px">шт.</div>
<div class="c n" style="left:407px;width:81px">1</div>
<div class="c n" style="left:488px;width:81px">4,85</div>
<div class="c n" style="left:569px;width:81px"></div>
<div class="c n" style="left:650px;width:81px">0,64</div>
<div class="c n" style="left:731px;width:81px"></div>
<div class="c n" style="left:812px;width:81px"></div>
<div class="c n" style="left:893px;width:81px">1</div>
<div class="c n" style="left:974px;width:80px">5,49</div>
</div>
<div class="row" style="top:172px;width:1054px;">
<div class="c" style="left:0;width:31px;padding:0;background:#e1f3f9;box-shadow:0 1px 0 #c9d9de;border-right-color:#c9d6da"><div class="cb" style="left:8px;top:2px"><svg width="10" height="10" viewBox="0 0 10 10"><path d="M1.7 4.2 L4.1 6.8 L8.6 1.9" fill="none" stroke="#000" stroke-width="2.1"/></svg></div></div>
<div class="c" style="left:31px;width:118px;padding:0 0 0 4.5px">8717163340561</div>
<div class="c" style="left:149px;width:225px;padding:0 0 0 4.5px;border-right:none">АНТИП.АЭР.РЕКСОНА АЛОЭ ВЕРА 150МЛ РФ</div><div class="a" style="left:375px;top:0;width:1px;height:16px;background:#d2d2d2"></div>
<div class="c" style="left:376px;width:31px;padding:0 0 0 4px">шт.</div>
<div class="c n" style="left:407px;width:81px">10</div>
<div class="c n" style="left:488px;width:81px">39,9</div>
<div class="c n" style="left:569px;width:81px"></div>
<div class="c n" style="left:650px;width:81px">1</div>
<div class="c n" style="left:731px;width:81px"></div>
<div class="c n" style="left:812px;width:81px"></div>
<div class="c n" style="left:893px;width:81px">10</div>
<div class="c n" style="left:974px;width:80px">40,9</div>
</div>
<div class="row" style="top:189px;width:1054px;">
<div class="c" style="left:0;width:31px;padding:0;background:#e1f3f9;box-shadow:0 1px 0 #c9d9de;border-right-color:#c9d6da"><div class="cb" style="left:8px;top:2px"><svg width="10" height="10" viewBox="0 0 10 10"><path d="M1.7 4.2 L4.1 6.8 L8.6 1.9" fill="none" stroke="#000" stroke-width="2.1"/></svg></div></div>
<div class="c" style="left:31px;width:118px;padding:0 0 0 4.5px">4000388669000</div>
<div class="c" style="left:149px;width:225px;padding:0 0 0 4.5px;border-right:none">АНТИП.АЭР.РЕКСОНА КОБАЛЬТ 150МЛ РФ</div><div class="a" style="left:375px;top:0;width:1px;height:16px;background:#d2d2d2"></div>
<div class="c" style="left:376px;width:31px;padding:0 0 0 4px">шт.</div>
<div class="c n" style="left:407px;width:81px">12</div>
<div class="c n" style="left:488px;width:81px">63</div>
<div class="c n" style="left:569px;width:81px"></div>
<div class="c n" style="left:650px;width:81px">10,08</div>
<div class="c n" style="left:731px;width:81px"></div>
<div class="c n" style="left:812px;width:81px"></div>
<div class="c n" style="left:893px;width:81px">12</div>
<div class="c n" style="left:974px;width:80px">73,08</div>
</div>
<div class="row" style="top:206px;width:1054px;">
<div class="c" style="left:0;width:31px;padding:0;background:#e1f3f9;box-shadow:0 1px 0 #c9d9de;border-right-color:#c9d6da"><div class="cb" style="left:8px;top:2px"><svg width="10" height="10" viewBox="0 0 10 10"><path d="M1.7 4.2 L4.1 6.8 L8.6 1.9" fill="none" stroke="#000" stroke-width="2.1"/></svg></div></div>
<div class="c" style="left:31px;width:118px;padding:0 0 0 4.5px">50097487</div>
<div class="c" style="left:149px;width:225px;padding:0 0 0 4.5px;border-right:none">АНТИПЕРСПИРАНТ ДАВ НЕВИДИМЫЙ 50МЛ РФ</div><div class="a" style="left:375px;top:0;width:1px;height:16px;background:#d2d2d2"></div>
<div class="c" style="left:376px;width:31px;padding:0 0 0 4px">шт.</div>
<div class="c n" style="left:407px;width:81px">8</div>
<div class="c n" style="left:488px;width:81px">38</div>
<div class="c n" style="left:569px;width:81px"></div>
<div class="c n" style="left:650px;width:81px">1,12</div>
<div class="c n" style="left:731px;width:81px"></div>
<div class="c n" style="left:812px;width:81px"></div>
<div class="c n" style="left:893px;width:81px">8</div>
<div class="c n" style="left:974px;width:80px">39,12</div>
</div>
<div class="row" style="top:223px;width:1054px;">
<div class="c" style="left:0;width:31px;padding:0;background:#e1f3f9;box-shadow:0 1px 0 #c9d9de;border-right-color:#c9d6da"><div class="cb" style="left:8px;top:2px"><svg width="10" height="10" viewBox="0 0 10 10"><path d="M1.7 4.2 L4.1 6.8 L8.6 1.9" fill="none" stroke="#000" stroke-width="2.1"/></svg></div></div>
<div class="c" style="left:31px;width:118px;padding:0 0 0 4.5px">30056640</div>
<div class="c" style="left:149px;width:225px;padding:0 0 0 4.5px;border-right:none">АНТИП.-КАРАНД.РЕКСОНА АЛОЕ ВЕРА 45Г РФ</div><div class="a" style="left:375px;top:0;width:1px;height:16px;background:#d2d2d2"></div>
<div class="c" style="left:376px;width:31px;padding:0 0 0 4px">шт.</div>
<div class="c n" style="left:407px;width:81px">8</div>
<div class="c n" style="left:488px;width:81px">42</div>
<div class="c n" style="left:569px;width:81px"></div>
<div class="c n" style="left:650px;width:81px">1,92</div>
<div class="c n" style="left:731px;width:81px"></div>
<div class="c n" style="left:812px;width:81px"></div>
<div class="c n" style="left:893px;width:81px">8</div>
<div class="c n" style="left:974px;width:80px">43,92</div>
</div>
<div class="row" style="top:240px;width:1054px;">
<div class="c" style="left:0;width:31px;padding:0;background:#e1f3f9;box-shadow:0 1px 0 #c9d9de;border-right-color:#c9d6da"><div class="cb" style="left:8px;top:2px"><svg width="10" height="10" viewBox="0 0 10 10"><path d="M1.7 4.2 L4.1 6.8 L8.6 1.9" fill="none" stroke="#000" stroke-width="2.1"/></svg></div></div>
<div class="c" style="left:31px;width:118px;padding:0 0 0 4.5px">73103714</div>
<div class="c" style="left:149px;width:225px;padding:0 0 0 4.5px;border-right:none">АНТИП.-КАРАНД.РЕКСОНА КОБАЛЬТ 55Г РФ</div><div class="a" style="left:375px;top:0;width:1px;height:16px;background:#d2d2d2"></div>
<div class="c" style="left:376px;width:31px;padding:0 0 0 4px">шт.</div>
<div class="c n" style="left:407px;width:81px">8</div>
<div class="c n" style="left:488px;width:81px">44,4</div>
<div class="c n" style="left:569px;width:81px"></div>
<div class="c n" style="left:650px;width:81px">2,4</div>
<div class="c n" style="left:731px;width:81px"></div>
<div class="c n" style="left:812px;width:81px"></div>
<div class="c n" style="left:893px;width:81px">8</div>
<div class="c n" style="left:974px;width:80px">46,8</div>
</div>
<div class="row" style="top:257px;width:1054px;">
<div class="c" style="left:0;width:31px;padding:0;background:#e1f3f9;box-shadow:0 1px 0 #c9d9de;border-right-color:#c9d6da"><div class="cb" style="left:8px;top:2px"><svg width="10" height="10" viewBox="0 0 10 10"><path d="M1.7 4.2 L4.1 6.8 L8.6 1.9" fill="none" stroke="#000" stroke-width="2.1"/></svg></div></div>
<div class="c" style="left:31px;width:118px;padding:0 0 0 4.5px">46143617</div>
<div class="c" style="left:149px;width:225px;padding:0 0 0 4.5px;border-right:none">АНТИП.-КАРАНД.РЕКСОНА НЕВ.НА ЧЕРН/БЕЛ.</div><div class="a" style="left:375px;top:0;width:1px;height:16px;background:#d2d2d2"></div>
<div class="c" style="left:376px;width:31px;padding:0 0 0 4px">шт.</div>
<div class="c n" style="left:407px;width:81px">8</div>
<div class="c n" style="left:488px;width:81px">44,4</div>
<div class="c n" style="left:569px;width:81px"></div>
<div class="c n" style="left:650px;width:81px">2,4</div>
<div class="c n" style="left:731px;width:81px"></div>
<div class="c n" style="left:812px;width:81px"></div>
<div class="c n" style="left:893px;width:81px">8</div>
<div class="c n" style="left:974px;width:80px">46,8</div>
</div>
<div class="row" style="top:274px;width:1054px;">
<div class="c" style="left:0;width:31px;padding:0;background:#e1f3f9;box-shadow:0 1px 0 #c9d9de;border-right-color:#c9d6da"><div class="cb" style="left:8px;top:2px"><svg width="10" height="10" viewBox="0 0 10 10"><path d="M1.7 4.2 L4.1 6.8 L8.6 1.9" fill="none" stroke="#000" stroke-width="2.1"/></svg></div></div>
<div class="c" style="left:31px;width:118px;padding:0 0 0 4.5px">50076598</div>
<div class="c" style="left:149px;width:225px;padding:0 0 0 4.5px;border-right:none">АНТИП.-КАРАНД.РЕКСОНА ПРОЗР.КРИСТАЛЛ</div><div class="a" style="left:375px;top:0;width:1px;height:16px;background:#d2d2d2"></div>
<div class="c" style="left:376px;width:31px;padding:0 0 0 4px">шт.</div>
<div class="c n" style="left:407px;width:81px">6</div>
<div class="c n" style="left:488px;width:81px">31,5</div>
<div class="c n" style="left:569px;width:81px"></div>
<div class="c n" style="left:650px;width:81px">1,44</div>
<div class="c n" style="left:731px;width:81px"></div>
<div class="c n" style="left:812px;width:81px"></div>
<div class="c n" style="left:893px;width:81px">6</div>
<div class="c n" style="left:974px;width:80px">32,94</div>
</div>
<div class="row" style="top:291px;width:1054px;">
<div class="c" style="left:0;width:31px;padding:0;background:#e1f3f9;box-shadow:0 1px 0 #c9d9de;border-right-color:#c9d6da"><div class="cb" style="left:8px;top:2px"><svg width="10" height="10" viewBox="0 0 10 10"><path d="M1.7 4.2 L4.1 6.8 L8.6 1.9" fill="none" stroke="#000" stroke-width="2.1"/></svg></div></div>
<div class="c" style="left:31px;width:118px;padding:0 0 0 4.5px">96003435</div>
<div class="c" style="left:149px;width:225px;padding:0 0 0 4.5px;border-right:none">АНТИП.-КАРАНД.РЕКСОНА СВЕЖЕСТЬ ДУША</div><div class="a" style="left:375px;top:0;width:1px;height:16px;background:#d2d2d2"></div>
<div class="c" style="left:376px;width:31px;padding:0 0 0 4px">шт.</div>
<div class="c n" style="left:407px;width:81px">4</div>
<div class="c n" style="left:488px;width:81px">21</div>
<div class="c n" style="left:569px;width:81px"></div>
<div class="c n" style="left:650px;width:81px">0,96</div>
<div class="c n" style="left:731px;width:81px">2</div>
<div class="c n" style="left:812px;width:81px">10,98</div>
<div class="c n" style="left:893px;width:81px">2</div>
<div class="c n" style="left:974px;width:80px">10,98</div>
</div>
<div class="row" style="top:308px;width:1054px;">
<div class="c" style="left:0;width:31px;padding:0;background:#e1f3f9;box-shadow:0 1px 0 #c9d9de;border-right-color:#c9d6da"><div class="cb" style="left:8px;top:2px"><svg width="10" height="10" viewBox="0 0 10 10"><path d="M1.7 4.2 L4.1 6.8 L8.6 1.9" fill="none" stroke="#000" stroke-width="2.1"/></svg></div></div>
<div class="c" style="left:31px;width:118px;padding:0 0 0 4.5px">46149879</div>
<div class="c" style="left:149px;width:225px;padding:0 0 0 4.5px;border-right:none">АНТИП.РЕКСОНА СУХОСТЬ ПУДРЫ 50МЛ РФ</div><div class="a" style="left:375px;top:0;width:1px;height:16px;background:#d2d2d2"></div>
<div class="c" style="left:376px;width:31px;padding:0 0 0 4px">шт.</div>
<div class="c n" style="left:407px;width:81px">10</div>
<div class="c n" style="left:488px;width:81px">43,5</div>
<div class="c n" style="left:569px;width:81px"></div>
<div class="c n" style="left:650px;width:81px">2,4</div>
<div class="c n" style="left:731px;width:81px"></div>
<div class="c n" style="left:812px;width:81px"></div>
<div class="c n" style="left:893px;width:81px">10</div>
<div class="c n" style="left:974px;width:80px">45,9</div>
</div>
<div class="row" style="top:325px;width:1054px;">
<div class="c" style="left:0;width:31px;padding:0;background:#e1f3f9;box-shadow:0 1px 0 #c9d9de;border-right-color:#c9d6da"><div class="cb" style="left:8px;top:2px"><svg width="10" height="10" viewBox="0 0 10 10"><path d="M1.7 4.2 L4.1 6.8 L8.6 1.9" fill="none" stroke="#000" stroke-width="2.1"/></svg></div></div>
<div class="c" style="left:31px;width:118px;padding:0 0 0 4.5px">50096114</div>
<div class="c" style="left:149px;width:225px;padding:0 0 0 4.5px;border-right:none">АНТИП.РЕКСОНА ЧИСТЫЙ БРИЛЛИАНТ 50МЛ</div><div class="a" style="left:375px;top:0;width:1px;height:16px;background:#d2d2d2"></div>
<div class="c" style="left:376px;width:31px;padding:0 0 0 4px">шт.</div>
<div class="c n" style="left:407px;width:81px">8</div>
<div class="c n" style="left:488px;width:81px">34,8</div>
<div class="c n" style="left:569px;width:81px"></div>
<div class="c n" style="left:650px;width:81px">1,92</div>
<div class="c n" style="left:731px;width:81px"></div>
<div class="c n" style="left:812px;width:81px"></div>
<div class="c n" style="left:893px;width:81px">8</div>
<div class="c n" style="left:974px;width:80px">36,72</div>
</div>
<div class="row" style="top:342px;width:1054px;">
<div class="c" style="left:0;width:31px;padding:0;background:#e1f3f9;box-shadow:0 1px 0 #c9d9de;border-right-color:#c9d6da"><div class="cb" style="left:8px;top:2px"><svg width="10" height="10" viewBox="0 0 10 10"><path d="M1.7 4.2 L4.1 6.8 L8.6 1.9" fill="none" stroke="#000" stroke-width="2.1"/></svg></div></div>
<div class="c" style="left:31px;width:118px;padding:0 0 0 4.5px">4005900169877</div>
<div class="c" style="left:149px;width:225px;padding:0 0 0 4.5px;border-right:none">АНТИП.-ШАР.НИВЕЯ ЗАРЯД УТРА МУЖ.50МЛ</div><div class="a" style="left:375px;top:0;width:1px;height:16px;background:#d2d2d2"></div>
<div class="c" style="left:376px;width:31px;padding:0 0 0 4px">шт.</div>
<div class="c n" style="left:407px;width:81px">12</div>
<div class="c n" style="left:488px;width:81px">67,8</div>
<div class="c n" style="left:569px;width:81px"></div>
<div class="c n" style="left:650px;width:81px">16,08</div>
<div class="c n" style="left:731px;width:81px"></div>
<div class="c n" style="left:812px;width:81px"></div>
<div class="c n" style="left:893px;width:81px">12</div>
<div class="c n" style="left:974px;width:80px">83,88</div>
</div>
<div class="row" style="top:359px;width:1054px;">
<div class="c" style="left:0;width:31px;padding:0;background:#e1f3f9;box-shadow:0 1px 0 #c9d9de;border-right-color:#c9d6da"><div class="cb" style="left:8px;top:2px"><svg width="10" height="10" viewBox="0 0 10 10"><path d="M1.7 4.2 L4.1 6.8 L8.6 1.9" fill="none" stroke="#000" stroke-width="2.1"/></svg></div></div>
<div class="c" style="left:31px;width:118px;padding:0 0 0 4.5px">4005900035264</div>
<div class="c" style="left:149px;width:225px;padding:0 0 0 4.5px;border-right:none">АНТИП.-ШАР.НИВЕЯ НЕВИД.ЗАЩ.ЖЕН.50МЛ</div><div class="a" style="left:375px;top:0;width:1px;height:16px;background:#d2d2d2"></div>
<div class="c" style="left:376px;width:31px;padding:0 0 0 4px">шт.</div>
<div class="c n" style="left:407px;width:81px">9</div>
<div class="c n" style="left:488px;width:81px">41,31</div>
<div class="c n" style="left:569px;width:81px"></div>
<div class="c n" style="left:650px;width:81px">3,6</div>
<div class="c n" style="left:731px;width:81px"></div>
<div class="c n" style="left:812px;width:81px"></div>
<div class="c n" style="left:893px;width:81px">9</div>
<div class="c n" style="left:974px;width:80px">44,91</div>
</div>
<div class="row" style="top:376px;width:1054px;">
<div class="c" style="left:0;width:31px;padding:0;background:#e1f3f9;box-shadow:0 1px 0 #c9d9de;border-right-color:#c9d6da"><div class="cb" style="left:8px;top:2px"><svg width="10" height="10" viewBox="0 0 10 10"><path d="M1.7 4.2 L4.1 6.8 L8.6 1.9" fill="none" stroke="#000" stroke-width="2.1"/></svg></div></div>
<div class="c" style="left:31px;width:118px;padding:0 0 0 4.5px">4005900036131</div>
<div class="c" style="left:149px;width:225px;padding:0 0 0 4.5px;border-right:none">АНТИП.-ШАР.НИВЕЯ НЕВИДИМЫЙ МУЖ.50МЛ</div><div class="a" style="left:375px;top:0;width:1px;height:16px;background:#d2d2d2"></div>
<div class="c" style="left:376px;width:31px;padding:0 0 0 4px">шт.</div>
<div class="c n" style="left:407px;width:81px">8</div>
<div class="c n" style="left:488px;width:81px">45,2</div>
<div class="c n" style="left:569px;width:81px"></div>
<div class="c n" style="left:650px;width:81px">2,4</div>
<div class="c n" style="left:731px;width:81px"></div>
<div class="c n" style="left:812px;width:81px"></div>
<div class="c n" style="left:893px;width:81px">8</div>
<div class="c n" style="left:974px;width:80px">47,6</div>
</div>
<div class="row" style="top:393px;width:1054px;">
<div class="c" style="left:0;width:31px;padding:0;background:#e1f3f9;box-shadow:0 1px 0 #c9d9de;border-right-color:#c9d6da"><div class="cb" style="left:8px;top:2px"><svg width="10" height="10" viewBox="0 0 10 10"><path d="M1.7 4.2 L4.1 6.8 L8.6 1.9" fill="none" stroke="#000" stroke-width="2.1"/></svg></div></div>
<div class="c" style="left:31px;width:118px;padding:0 0 0 4.5px">4005900828095</div>
<div class="c" style="left:149px;width:225px;padding:0 0 0 4.5px;border-right:none">АНТИП.-ШАР.НИВЕЯ ПРИРОДНАЯ СВЕЖ.ЖЕН.</div><div class="a" style="left:375px;top:0;width:1px;height:16px;background:#d2d2d2"></div>
<div class="c" style="left:376px;width:31px;padding:0 0 0 4px">шт.</div>
<div class="c n" style="left:407px;width:81px">12</div>
<div class="c n" style="left:488px;width:81px">57</div>
<div class="c n" style="left:569px;width:81px"></div>
<div class="c n" style="left:650px;width:81px">13,68</div>
<div class="c n" style="left:731px;width:81px"></div>
<div class="c n" style="left:812px;width:81px"></div>
<div class="c n" style="left:893px;width:81px">12</div>
<div class="c n" style="left:974px;width:80px">70,68</div>
</div>
<div class="row" style="top:410px;width:1054px;">
<div class="c" style="left:0;width:31px;padding:0;background:#e1f3f9;box-shadow:0 1px 0 #c9d9de;border-right-color:#c9d6da"><div class="cb" style="left:8px;top:2px"><svg width="10" height="10" viewBox="0 0 10 10"><path d="M1.7 4.2 L4.1 6.8 L8.6 1.9" fill="none" stroke="#000" stroke-width="2.1"/></svg></div></div>
<div class="c" style="left:31px;width:118px;padding:0 0 0 4.5px">50330317</div>
<div class="c" style="left:149px;width:225px;padding:0 0 0 4.5px;border-right:none">АНТИП.-ШАР.РЕКСОНА АЛОЭ ВЕРА 50МЛ РФ</div><div class="a" style="left:375px;top:0;width:1px;height:16px;background:#d2d2d2"></div>
<div class="c" style="left:376px;width:31px;padding:0 0 0 4px">шт.</div>
<div class="c n" style="left:407px;width:81px">4</div>
<div class="c n" style="left:488px;width:81px">17,4</div>
<div class="c n" style="left:569px;width:81px"></div>
<div class="c n" style="left:650px;width:81px">4,4</div>
<div class="c n" style="left:731px;width:81px"></div>
<div class="c n" style="left:812px;width:81px"></div>
<div class="c n" style="left:893px;width:81px">4</div>
<div class="c n" style="left:974px;width:80px">21,8</div>
</div>
<div class="row" style="top:427px;width:1054px;">
<div class="c" style="left:0;width:31px;padding:0;background:#e1f3f9;box-shadow:0 1px 0 #c9d9de;border-right-color:#c9d6da"><div class="cb" style="left:8px;top:2px"><svg width="10" height="10" viewBox="0 0 10 10"><path d="M1.7 4.2 L4.1 6.8 L8.6 1.9" fill="none" stroke="#000" stroke-width="2.1"/></svg></div></div>
<div class="c" style="left:31px;width:118px;padding:0 0 0 4.5px">87294880</div>
<div class="c" style="left:149px;width:225px;padding:0 0 0 4.5px;border-right:none">АНТИП.-ШАР.РЕКСОНА АНТИБАКТ.ЭФФ.ЖЕН.</div><div class="a" style="left:375px;top:0;width:1px;height:16px;background:#d2d2d2"></div>
<div class="c" style="left:376px;width:31px;padding:0 0 0 4px">шт.</div>
<div class="c n" style="left:407px;width:81px">12</div>
<div class="c n" style="left:488px;width:81px">52,2</div>
<div class="c n" style="left:569px;width:81px"></div>
<div class="c n" style="left:650px;width:81px">1,68</div>
<div class="c n" style="left:731px;width:81px"></div>
<div class="c n" style="left:812px;width:81px"></div>
<div class="c n" style="left:893px;width:81px">12</div>
<div class="c n" style="left:974px;width:80px">53,88</div>
</div>
<div class="row" style="top:444px;width:1054px;">
<div class="c" style="left:0;width:31px;padding:0;background:#e1f3f9;box-shadow:0 1px 0 #c9d9de;border-right-color:#c9d6da"><div class="cb" style="left:8px;top:2px"><svg width="10" height="10" viewBox="0 0 10 10"><path d="M1.7 4.2 L4.1 6.8 L8.6 1.9" fill="none" stroke="#000" stroke-width="2.1"/></svg></div></div>
<div class="c" style="left:31px;width:118px;padding:0 0 0 4.5px">50096084</div>
<div class="c" style="left:149px;width:225px;padding:0 0 0 4.5px;border-right:none">АНТИП.-ШАР.РЕКСОНА ПРОЗР.КРИСТАЛЛ 50МЛ</div><div class="a" style="left:375px;top:0;width:1px;height:16px;background:#d2d2d2"></div>
<div class="c" style="left:376px;width:31px;padding:0 0 0 4px">шт.</div>
<div class="c n" style="left:407px;width:81px">7</div>
<div class="c n" style="left:488px;width:81px">30,45</div>
<div class="c n" style="left:569px;width:81px"></div>
<div class="c n" style="left:650px;width:81px">8,68</div>
<div class="c n" style="left:731px;width:81px"></div>
<div class="c n" style="left:812px;width:81px"></div>
<div class="c n" style="left:893px;width:81px">7</div>
<div class="c n" style="left:974px;width:80px">39,13</div>
</div>
<div class="row" style="top:461px;width:1054px;">
<div class="c" style="left:0;width:31px;padding:0;background:#e1f3f9;box-shadow:0 1px 0 #c9d9de;border-right-color:#c9d6da"><div class="cb" style="left:8px;top:2px"><svg width="10" height="10" viewBox="0 0 10 10"><path d="M1.7 4.2 L4.1 6.8 L8.6 1.9" fill="none" stroke="#000" stroke-width="2.1"/></svg></div></div>
<div class="c" style="left:31px;width:118px;padding:0 0 0 4.5px">4600171527274</div>
<div class="c" style="left:149px;width:225px;padding:0 0 0 4.5px;border-right:none">АНТИСТАТИК 180МЛ 0.18кг.</div><div class="a" style="left:375px;top:0;width:1px;height:16px;background:#d2d2d2"></div>
<div class="c" style="left:376px;width:31px;padding:0 0 0 4px">шт.</div>
<div class="c n" style="left:407px;width:81px">6</div>
<div class="c n" style="left:488px;width:81px">21,54</div>
<div class="c n" style="left:569px;width:81px"></div>
<div class="c n" style="left:650px;width:81px">7,56</div>
<div class="c n" style="left:731px;width:81px"></div>
<div class="c n" style="left:812px;width:81px"></div>
<div class="c n" style="left:893px;width:81px">6</div>
<div class="c n" style="left:974px;width:80px">29,1</div>
</div>
<div class="row" style="top:478px;width:1054px;">
<div class="c" style="left:0;width:31px;padding:0;background:#e1f3f9;box-shadow:0 1px 0 #c9d9de;border-right-color:#c9d6da"><div class="cb" style="left:8px;top:2px"><svg width="10" height="10" viewBox="0 0 10 10"><path d="M1.7 4.2 L4.1 6.8 L8.6 1.9" fill="none" stroke="#000" stroke-width="2.1"/></svg></div></div>
<div class="c" style="left:31px;width:118px;padding:0 0 0 4.5px">4607131425496</div>
<div class="c" style="left:149px;width:225px;padding:0 0 0 4.5px;border-right:none">АЭРОЗОЛЬ ОТ КОМАРОВ ГАРДЕКС 80МЛ GARDEX</div><div class="a" style="left:375px;top:0;width:1px;height:16px;background:#d2d2d2"></div>
<div class="c" style="left:376px;width:31px;padding:0 0 0 4px">шт.</div>
<div class="c n" style="left:407px;width:81px">14</div>
<div class="c n" style="left:488px;width:81px">105,7</div>
<div class="c n" style="left:569px;width:81px"></div>
<div class="c n" style="left:650px;width:81px">5,6</div>
<div class="c n" style="left:731px;width:81px"></div>
<div class="c n" style="left:812px;width:81px"></div>
<div class="c n" style="left:893px;width:81px">14</div>
<div class="c n" style="left:974px;width:80px">111,3</div>
</div>
<div class="row" style="top:495px;width:1054px;">
<div class="c" style="left:0;width:31px;padding:0;background:#e1f3f9;box-shadow:0 1px 0 #c9d9de;border-right-color:#c9d6da"><div class="cb" style="left:8px;top:2px"><svg width="10" height="10" viewBox="0 0 10 10"><path d="M1.7 4.2 L4.1 6.8 L8.6 1.9" fill="none" stroke="#000" stroke-width="2.1"/></svg></div></div>
<div class="c" style="left:31px;width:118px;padding:0 0 0 4.5px">4600104027192</div>
<div class="c" style="left:149px;width:225px;padding:0 0 0 4.5px;border-right:none">АЭРОЗОЛЬ ОТ МОЛИ АРМОЛЬ ЭКСПЕРТ 190МЛ</div><div class="a" style="left:375px;top:0;width:1px;height:16px;background:#d2d2d2"></div>
<div class="c" style="left:376px;width:31px;padding:0 0 0 4px">шт.</div>
<div class="c n" style="left:407px;width:81px">6</div>
<div class="c n" style="left:488px;width:81px">25,74</div>
<div class="c n" style="left:569px;width:81px"></div>
<div class="c n" style="left:650px;width:81px"></div>
<div class="c n" style="left:731px;width:81px"></div>
<div class="c n" style="left:812px;width:81px"></div>
<div class="c n" style="left:893px;width:81px">6</div>
<div class="c n" style="left:974px;width:80px">25,74</div>
</div>
<div class="row" style="top:512px;width:1054px;">
<div class="c" style="left:0;width:31px;padding:0;background:#e1f3f9;box-shadow:0 1px 0 #c9d9de;border-right-color:#c9d6da"><div class="cb" style="left:8px;top:2px"><svg width="10" height="10" viewBox="0 0 10 10"><path d="M1.7 4.2 L4.1 6.8 L8.6 1.9" fill="none" stroke="#000" stroke-width="2.1"/></svg></div></div>
<div class="c" style="left:31px;width:118px;padding:0 0 0 4.5px">4607131420835</div>
<div class="c" style="left:149px;width:225px;padding:0 0 0 4.5px;border-right:none">АЭРОЗОЛЬ ОТ МОШЕК ГАРДЭКС ЭКСТР.100МЛ</div><div class="a" style="left:375px;top:0;width:1px;height:16px;background:#d2d2d2"></div>
<div class="c" style="left:376px;width:31px;padding:0 0 0 4px">шт.</div>
<div class="c n" style="left:407px;width:81px">5</div>
<div class="c n" style="left:488px;width:81px">5</div>
<div class="c n" style="left:569px;width:81px"></div>
<div class="c n" style="left:650px;width:81px">4,75</div>
<div class="c n" style="left:731px;width:81px"></div>
<div class="c n" style="left:812px;width:81px"></div>
<div class="c n" style="left:893px;width:81px">5</div>
<div class="c n" style="left:974px;width:80px">9,75</div>
</div>
<div class="row" style="top:529px;width:1054px;">
<div class="c" style="left:0;width:31px;padding:0;background:#e1f3f9;box-shadow:0 1px 0 #c9d9de;border-right-color:#c9d6da"><div class="cb" style="left:8px;top:2px"><svg width="10" height="10" viewBox="0 0 10 10"><path d="M1.7 4.2 L4.1 6.8 L8.6 1.9" fill="none" stroke="#000" stroke-width="2.1"/></svg></div></div>
<div class="c" style="left:31px;width:118px;padding:0 0 0 4.5px">4607131422129</div>
<div class="c" style="left:149px;width:225px;padding:0 0 0 4.5px;border-right:none">АЭРОЗ.РЕПЕЛ.ГАРДЕКС ОТ КОМАРОВ 150МЛ</div><div class="a" style="left:375px;top:0;width:1px;height:16px;background:#d2d2d2"></div>
<div class="c" style="left:376px;width:31px;padding:0 0 0 4px">шт.</div>
<div class="c n" style="left:407px;width:81px">15</div>
<div class="c n" style="left:488px;width:81px">74,85</div>
<div class="c n" style="left:569px;width:81px"></div>
<div class="c n" style="left:650px;width:81px">-3,6</div>
<div class="c n" style="left:731px;width:81px"></div>
<div class="c n" style="left:812px;width:81px"></div>
<div class="c n" style="left:893px;width:81px">15</div>
<div class="c n" style="left:974px;width:80px">71,25</div>
</div>
<div class="row" style="top:546px;width:1054px;">
<div class="c" style="left:0;width:31px;padding:0;background:#e1f3f9;box-shadow:0 1px 0 #c9d9de;border-right-color:#c9d6da"><div class="cb" style="left:8px;top:2px"><svg width="10" height="10" viewBox="0 0 10 10"><path d="M1.7 4.2 L4.1 6.8 L8.6 1.9" fill="none" stroke="#000" stroke-width="2.1"/></svg></div></div>
<div class="c" style="left:31px;width:118px;padding:0 0 0 4.5px">4607131428305</div>
<div class="c" style="left:149px;width:225px;padding:0 0 0 4.5px;border-right:none">АЭРОЗ.РЕПЕЛ.ОТ КОМАРОВ ГАРДЕКС 100МЛ</div><div class="a" style="left:375px;top:0;width:1px;height:16px;background:#d2d2d2"></div>
<div class="c" style="left:376px;width:31px;padding:0 0 0 4px">шт.</div>
<div class="c n" style="left:407px;width:81px">10</div>
<div class="c n" style="left:488px;width:81px">45,5</div>
<div class="c n" style="left:569px;width:81px"></div>
<div class="c n" style="left:650px;width:81px"></div>
<div class="c n" style="left:731px;width:81px"></div>
<div class="c n" style="left:812px;width:81px"></div>
<div class="c n" style="left:893px;width:81px">10</div>
<div class="c n" style="left:974px;width:80px">45,5</div>
</div>
<div class="row" style="top:563px;width:1054px;">
<div class="c" style="left:0;width:31px;padding:0;background:#e1f3f9;box-shadow:0 1px 0 #c9d9de;border-right-color:#c9d6da"><div class="cb" style="left:8px;top:2px"><svg width="10" height="10" viewBox="0 0 10 10"><path d="M1.7 4.2 L4.1 6.8 L8.6 1.9" fill="none" stroke="#000" stroke-width="2.1"/></svg></div></div>
<div class="c" style="left:31px;width:118px;padding:0 0 0 4.5px">4810151020187</div>
<div class="c" style="left:149px;width:225px;padding:0 0 0 4.5px;border-right:none">БАЛЬЗАМ БЕЛИТА ЯНГ 300МЛ БЕЛИТА 0.3кг.</div><div class="a" style="left:375px;top:0;width:1px;height:16px;background:#d2d2d2"></div>
<div class="c" style="left:376px;width:31px;padding:0 0 0 4px">шт.</div>
<div class="c n" style="left:407px;width:81px">14</div>
<div class="c n" style="left:488px;width:81px">41,86</div>
<div class="c n" style="left:569px;width:81px"></div>
<div class="c n" style="left:650px;width:81px">2,24</div>
<div class="c n" style="left:731px;width:81px"></div>
<div class="c n" style="left:812px;width:81px"></div>
<div class="c n" style="left:893px;width:81px">14</div>
<div class="c n" style="left:974px;width:80px">44,1</div>
</div>
<div class="row" style="top:580px;width:1054px;">
<div class="c" style="left:0;width:31px;padding:0;background:#e1f3f9;box-shadow:0 1px 0 #c9d9de;border-right-color:#c9d6da"><div class="cb" style="left:8px;top:2px"><svg width="10" height="10" viewBox="0 0 10 10"><path d="M1.7 4.2 L4.1 6.8 L8.6 1.9" fill="none" stroke="#000" stroke-width="2.1"/></svg></div></div>
<div class="c" style="left:31px;width:118px;padding:0 0 0 4.5px">4605966004671</div>
<div class="c" style="left:149px;width:225px;padding:0 0 0 4.5px;border-right:none">БАЛЬЗАМ ГЛИСС КУР ЖИДКИЙ ШЕЛК 200МЛ</div><div class="a" style="left:375px;top:0;width:1px;height:16px;background:#d2d2d2"></div>
<div class="c" style="left:376px;width:31px;padding:0 0 0 4px">шт.</div>
<div class="c n" style="left:407px;width:81px">5</div>
<div class="c n" style="left:488px;width:81px">23,75</div>
<div class="c n" style="left:569px;width:81px"></div>
<div class="c n" style="left:650px;width:81px">3,5</div>
<div class="c n" style="left:731px;width:81px"></div>
<div class="c n" style="left:812px;width:81px"></div>
<div class="c n" style="left:893px;width:81px">5</div>
<div class="c n" style="left:974px;width:80px">27,25</div>
</div>
<div class="row" style="top:597px;width:1054px;">
<div class="c" style="left:0;width:31px;padding:0;background:#e1f3f9;box-shadow:0 1px 0 #c9d9de;border-right-color:#c9d6da"><div class="cb" style="left:8px;top:2px"><svg width="10" height="10" viewBox="0 0 10 10"><path d="M1.7 4.2 L4.1 6.8 L8.6 1.9" fill="none" stroke="#000" stroke-width="2.1"/></svg></div></div>
<div class="c" style="left:31px;width:118px;padding:0 0 0 4.5px">4015000942041</div>
<div class="c" style="left:149px;width:225px;padding:0 0 0 4.5px;border-right:none">БАЛЬЗАМ ГЛИСС КУР ЭКСТРЕМ.ВОССТАН.200</div><div class="a" style="left:375px;top:0;width:1px;height:16px;background:#d2d2d2"></div>
<div class="c" style="left:376px;width:31px;padding:0 0 0 4px">шт.</div>
<div class="c n" style="left:407px;width:81px">5</div>
<div class="c n" style="left:488px;width:81px">23,75</div>
<div class="c n" style="left:569px;width:81px"></div>
<div class="c n" style="left:650px;width:81px">3,5</div>
<div class="c n" style="left:731px;width:81px"></div>
<div class="c n" style="left:812px;width:81px"></div>
<div class="c n" style="left:893px;width:81px">5</div>
<div class="c n" style="left:974px;width:80px">27,25</div>
</div>
<div class="row" style="top:614px;width:1054px;">
<div class="c" style="left:0;width:31px;padding:0;background:#e1f3f9;box-shadow:0 1px 0 #c9d9de;border-right-color:#c9d6da"><div class="cb" style="left:8px;top:2px"><svg width="10" height="10" viewBox="0 0 10 10"><path d="M1.7 4.2 L4.1 6.8 L8.6 1.9" fill="none" stroke="#000" stroke-width="2.1"/></svg></div></div>
<div class="c" style="left:31px;width:118px;padding:0 0 0 4.5px">4810153021137</div>
<div class="c" style="left:149px;width:225px;padding:0 0 0 4.5px;border-right:none">БАЛЬЗАМ Д/ВОЛ.ВИТЭКС ГУСТ/БЛЕСТ.450МЛ</div><div class="a" style="left:375px;top:0;width:1px;height:16px;background:#d2d2d2"></div>
<div class="c" style="left:376px;width:31px;padding:0 0 0 4px">шт.</div>
<div class="c n" style="left:407px;width:81px">9</div>
<div class="c n" style="left:488px;width:81px">24,75</div>
<div class="c n" style="left:569px;width:81px"></div>
<div class="c n" style="left:650px;width:81px">0,7</div>
<div class="c n" style="left:731px;width:81px">2</div>
<div class="c n" style="left:812px;width:81px">5,5</div>
<div class="c n" style="left:893px;width:81px">7</div>
<div class="c n" style="left:974px;width:80px">19,95</div>
</div>
<div class="row" style="top:631px;width:1054px;">
<div class="c" style="left:0;width:31px;padding:0;background:#e1f3f9;box-shadow:0 1px 0 #c9d9de;border-right-color:#c9d6da"><div class="cb" style="left:8px;top:2px"><svg width="10" height="10" viewBox="0 0 10 10"><path d="M1.7 4.2 L4.1 6.8 L8.6 1.9" fill="none" stroke="#000" stroke-width="2.1"/></svg></div></div>
<div class="c" style="left:31px;width:118px;padding:0 0 0 4.5px">4810153018977</div>
<div class="c" style="left:149px;width:225px;padding:0 0 0 4.5px;border-right:none">БАЛЬЗАМ Д/ВОЛ.МАСЛО АРГ/ЖИДК.ШЕЛК 500</div><div class="a" style="left:375px;top:0;width:1px;height:16px;background:#d2d2d2"></div>
<div class="c" style="left:376px;width:31px;padding:0 0 0 4px">шт.</div>
<div class="c n" style="left:407px;width:81px">9</div>
<div class="c n" style="left:488px;width:81px">27,81</div>
<div class="c n" style="left:569px;width:81px"></div>
<div class="c n" style="left:650px;width:81px">0,9</div>
<div class="c n" style="left:731px;width:81px"></div>
<div class="c n" style="left:812px;width:81px"></div>
<div class="c n" style="left:893px;width:81px">9</div>
<div class="c n" style="left:974px;width:80px">28,71</div>
</div>
<div class="row" style="top:648px;width:1054px;">
<div class="c" style="left:0;width:31px;padding:0;background:#e1f3f9;box-shadow:0 1px 0 #c9d9de;border-right-color:#c9d6da"><div class="cb" style="left:8px;top:2px"><svg width="10" height="10" viewBox="0 0 10 10"><path d="M1.7 4.2 L4.1 6.8 L8.6 1.9" fill="none" stroke="#000" stroke-width="2.1"/></svg></div></div>
<div class="c" style="left:31px;width:118px;padding:0 0 0 4.5px">4810151002015</div>
<div class="c" style="left:149px;width:225px;padding:0 0 0 4.5px;border-right:none">БАЛЬЗАМ Д/ВОЛ.РЕВИВОР 450МЛ БЕЛИТА</div><div class="a" style="left:375px;top:0;width:1px;height:16px;background:#d2d2d2"></div>
<div class="c" style="left:376px;width:31px;padding:0 0 0 4px">шт.</div>
<div class="c n" style="left:407px;width:81px">9</div>
<div class="c n" style="left:488px;width:81px">24,21</div>
<div class="c n" style="left:569px;width:81px"></div>
<div class="c n" style="left:650px;width:81px">0,9</div>
<div class="c n" style="left:731px;width:81px"></div>
<div class="c n" style="left:812px;width:81px"></div>
<div class="c n" style="left:893px;width:81px">9</div>
<div class="c n" style="left:974px;width:80px">25,11</div>
</div>
<div class="a" style="left:1054px;top:36px;width:18px;height:620px;background:#f0f0f0"></div>
<div class="a" style="left:1057px;top:53px;width:13px;height:385px;background:#c1c1c1"></div>
<svg class="a" style="left:1058px;top:41px" width="10" height="6" viewBox="0 0 10 6"><path d="M0.8 5.2 L5 0.8 L9.2 5.2 Z" fill="#a3a3a3"/></svg>
<svg class="a" style="left:1058px;top:641px" width="10" height="6" viewBox="0 0 10 6"><path d="M0.8 0.8 L5 5.2 L9.2 0.8 Z" fill="#505050"/></svg>
</div>
<div class="tb" style="left:453px;top:857px;width:20px;height:20px"></div>
<svg class="a" style="left:453px;top:857px" width="20" height="20" viewBox="0 0 20 20"><g transform="translate(0.2,0.2)"><path d="M3.2 4.1 H13.4 L9.6 8.1 H7 Z" fill="#dbe8e8" stroke="#2b4545" stroke-width="1.15" stroke-linejoin="round"/><rect x="6.7" y="7.9" width="3.2" height="3.9" fill="#2b4545"/><rect x="7.8" y="8.6" width="1" height="1.5" fill="#c5d8d8"/><circle cx="8" cy="6" r="0.6" fill="#8aa"/><path d="M9.8 13.3 H14.8 M12.3 10.8 V15.8" stroke="#505050" stroke-width="1.1" fill="none"/></g></svg>
<div class="tb" style="left:482px;top:857px;width:20px;height:20px"></div>
<svg class="a" style="left:482px;top:857px" width="20" height="20" viewBox="0 0 20 20"><g transform="translate(0.2,0.2)"><rect x="2.35" y="2.5" width="14.95" height="13.6" rx="1" fill="#fdfdfd" stroke="#8b8b8b" stroke-width="1"/><rect x="3.9" y="3.9" width="11.85" height="10.8" fill="#bcbcbc"/><rect x="3.9" y="3.9" width="11.85" height="2.2" fill="#c9c9c9"/><rect x="4.8" y="4.7" width="0.9" height="1" fill="#e3e3e3"/><rect x="6.8" y="4.55" width="1.8" height="1.3" fill="#e3e3e3"/><rect x="13.1" y="4.55" width="1.8" height="1.3" fill="#e3e3e3"/><rect x="4.8" y="6.8" width="0.9" height="1" fill="#fff"/><rect x="6.8" y="6.6499999999999995" width="1.8" height="1.3" fill="#fff"/><rect x="13.1" y="6.6499999999999995" width="1.8" height="1.3" fill="#fff"/><rect x="4.8" y="8.8" width="0.9" height="1" fill="#fff"/><rect x="6.8" y="8.65" width="1.8" height="1.3" fill="#fff"/><rect x="13.1" y="8.65" width="1.8" height="1.3" fill="#fff"/><rect x="4.8" y="10.8" width="0.9" height="1" fill="#fff"/><rect x="6.8" y="10.65" width="1.8" height="1.3" fill="#fff"/><rect x="13.1" y="10.65" width="1.8" height="1.3" fill="#fff"/><rect x="4.8" y="12.9" width="0.9" height="1" fill="#fff"/><rect x="6.8" y="12.75" width="1.8" height="1.3" fill="#fff"/><rect x="13.1" y="12.75" width="1.8" height="1.3" fill="#fff"/><rect x="9.15" y="3.7" width="3.35" height="11.2" fill="#454545"/><rect x="10.15" y="4.3" width="1.35" height="10" fill="#b5b5b5"/><rect x="10.3" y="4.7" width="1.05" height="1" fill="#e6e6e6"/><rect x="10.3" y="6.8" width="1.05" height="1" fill="#e6e6e6"/><rect x="10.3" y="8.8" width="1.05" height="1" fill="#e6e6e6"/><rect x="10.3" y="10.8" width="1.05" height="1" fill="#e6e6e6"/><rect x="10.3" y="12.9" width="1.05" height="1" fill="#e6e6e6"/></g></svg>
<div class="tb" style="left:506px;top:857px;width:20px;height:20px"></div>
<svg class="a" style="left:506px;top:857px" width="20" height="20" viewBox="0 0 20 20"><g transform="translate(0.2,0.2)"><path d="M7.8 4.2 H16.6 M7.8 9.2 H16.6 M7.8 14.2 H16.6" stroke="#303030" stroke-width="1.15"/><text x="2.7" y="6.6" font-family="Liberation Sans, sans-serif" font-size="5.3" font-weight="bold" fill="#222" stroke="#222" stroke-width="0.25">1</text><text x="2.7" y="11.7" font-family="Liberation Sans, sans-serif" font-size="5.3" font-weight="bold" fill="#222" stroke="#222" stroke-width="0.25">2</text><text x="2.7" y="16.8" font-family="Liberation Sans, sans-serif" font-size="5.3" font-weight="bold" fill="#222" stroke="#222" stroke-width="0.25">3</text></g></svg>
<div class="tb" style="left:530px;top:857px;width:20px;height:20px"></div>
<svg class="a" style="left:530px;top:857px" width="20" height="20" viewBox="0 0 20 20"><g transform="translate(0.2,0.2)"><rect x="4.3" y="2.4" width="9.9" height="14.8" fill="#e0e0e0" stroke="#767676" stroke-width="0.9"/><rect x="4.75" y="2.85" width="9" height="1.1" fill="#fafafa"/><rect x="4.3" y="3.9" width="9.9" height="3.5" fill="#555"/><rect x="5.1" y="5.2" width="8.4" height="1.5" fill="#a6a6a6"/><rect x="12.2" y="5.2" width="0.5" height="1.5" fill="#666"/><rect x="5.8" y="8.950000000000001" width="0.9" height="0.9" fill="#8a8a8a"/><rect x="7.8" y="8.950000000000001" width="0.9" height="0.9" fill="#8a8a8a"/><rect x="9.8" y="8.950000000000001" width="0.9" height="0.9" fill="#8a8a8a"/><rect x="11.75" y="8.950000000000001" width="0.9" height="0.9" fill="#8a8a8a"/><rect x="5.8" y="10.850000000000001" width="0.9" height="0.9" fill="#8a8a8a"/><rect x="7.8" y="10.850000000000001" width="0.9" height="0.9" fill="#8a8a8a"/><rect x="9.8" y="10.850000000000001" width="0.9" height="0.9" fill="#8a8a8a"/><rect x="11.75" y="10.850000000000001" width="0.9" height="0.9" fill="#8a8a8a"/><rect x="5.8" y="12.850000000000001" width="0.9" height="0.9" fill="#8a8a8a"/><rect x="7.8" y="12.850000000000001" width="0.9" height="0.9" fill="#8a8a8a"/><rect x="9.8" y="12.850000000000001" width="0.9" height="0.9" fill="#8a8a8a"/><rect x="11.75" y="12.850000000000001" width="0.9" height="0.9" fill="#8a8a8a"/><rect x="5.8" y="14.850000000000001" width="0.9" height="0.9" fill="#8a8a8a"/><rect x="7.8" y="14.850000000000001" width="0.9" height="0.9" fill="#8a8a8a"/><rect x="9.8" y="14.850000000000001" width="0.9" height="0.9" fill="#8a8a8a"/><rect x="11.75" y="14.850000000000001" width="0.9" height="0.9" fill="#8a8a8a"/><path d="M14.3 12.3 V16.3 M12.3 14.3 H16.3" stroke="#4c4c4c" stroke-width="2.7" stroke-linecap="round"/><path d="M14.3 12.3 V16.3 M12.3 14.3 H16.3" stroke="#727272" stroke-width="1.6" stroke-linecap="round"/></g></svg>
<div class="tb" style="left:559px;top:857px;width:20px;height:20px"></div>
<svg class="a" style="left:559px;top:857px" width="20" height="20" viewBox="0 0 20 20"><g transform="translate(0.2,0.2)"><path d="M1.9 10 L5.4 8.4 L12.7 8.6 L16.8 7.3 V13.7 L14.4 16.6 H3.6 L1.9 14.6 Z" fill="#d9d9d9" stroke="#6a6a6a" stroke-width="0.8" stroke-linejoin="round"/><path d="M12.2 10.6 L16.8 7.3 V13.7 L14.4 16.6 H12.2 Z" fill="#6c6c6c"/><path d="M2 10.1 L5.4 8.5 L12.7 8.7 L12.2 10.5 H2.4 Z" fill="#f1f1f1"/><path d="M2.2 10.9 H12.4" stroke="#7a7a7a" stroke-width="0.9"/><rect x="3.2" y="12" width="7.9" height="3.2" rx="0.9" fill="#fff"/><rect x="11.8" y="12.2" width="1.2" height="1.5" fill="#ddd"/><path d="M3.2 16.2 H14.2" stroke="#2e2e2e" stroke-width="0.9"/><path d="M8 3 L15.3 3.5 L12.7 8.6 L5.4 8.5 Z" fill="#f5f5f5" stroke="#8c8c8c" stroke-width="0.7" stroke-linejoin="round"/><path d="M15.3 3.6 L12.8 8.5" stroke="#3f3f3f" stroke-width="1.4"/><path d="M9.3 5 Q10.8 4.2 12.6 5.1 M8.6 6.6 Q10 6 11.6 6.7" stroke="#9a9a9a" stroke-width="0.7" fill="none"/></g></svg>
<div class="tb" style="left:583px;top:857px;width:20px;height:20px"></div>
<svg class="a" style="left:583px;top:857px" width="20" height="20" viewBox="0 0 20 20"><g transform="translate(0.2,0.2)"><rect x="2.5" y="3.6" width="13.4" height="12.3" fill="#ececec" stroke="#6f6f6f" stroke-width="1.4"/><rect x="2" y="3" width="14.4" height="1.4" fill="#777"/><rect x="3.6" y="4.8" width="11.2" height="10" fill="none" stroke="#cfcfcf" stroke-width="0.8"/><path d="M5 7 L14 13.5 M13.2 6.8 L5 13.4" stroke="#5c5c5c" stroke-width="2"/><path d="M4.6 13.4 H11" stroke="#7a7a7a" stroke-width="0.9"/><path d="M5 7 H8.4 M10.4 7 H13.4" stroke="#777" stroke-width="0.9"/></g></svg>
<div class="tb" style="left:612px;top:857px;width:20px;height:20px;background:#fafafa"></div>
<svg class="a" style="left:612px;top:857px" width="20" height="20" viewBox="0 0 20 20"><g transform="translate(0.2,0.2)"><rect x="3.3" y="3.3" width="12.9" height="12.9" fill="#fff" stroke="#000" stroke-width="1.25"/><rect x="7.1" y="3.9" width="4.9" height="11.7" fill="#d3d3d3"/><rect x="3.9" y="3.9" width="11.7" height="4" fill="#cdcdcd" opacity="0.85"/><path d="M7.1 3.9 V15.6 M12 3.9 V15.6" stroke="#707070" stroke-width="0.8"/><path d="M3.9 7.9 H15.6" stroke="#e8e8e8" stroke-width="0.7"/><rect x="10.8" y="10.8" width="7" height="6.9" rx="1.6" fill="#8b8b8b"/><path d="M12.5 12.4 L16.2 16.1 M16.2 12.4 L12.5 16.1" stroke="#fff" stroke-width="1.9"/></g></svg>
<div class="a" style="left:1225px;top:858px;width:12px;height:12px;border:1px solid #a9a9a9;border-radius:2px;background:linear-gradient(#ededed,#dcdcdc)"><svg class="a" style="left:0;top:0" width="10" height="10" viewBox="0 0 10 10"><path d="M1.7 5 L4.1 7.6 L8.6 1.7" fill="none" stroke="#333" stroke-width="2.1"/></svg></div>
<div class="lb" style="left:1241.5px;top:860.5px">Отмеченные</div>
<div class="btn" style="left:1306px;top:859px;width:107px;height:16px;line-height:14px">Подбор документа</div>
<div class="btn" style="left:1417px;top:859px;width:105px;height:16px;line-height:14px">Очистить выборку</div>
<div class="a" style="left:0;top:454px;width:1px;height:7px;background:#333"></div>
</body></html>
